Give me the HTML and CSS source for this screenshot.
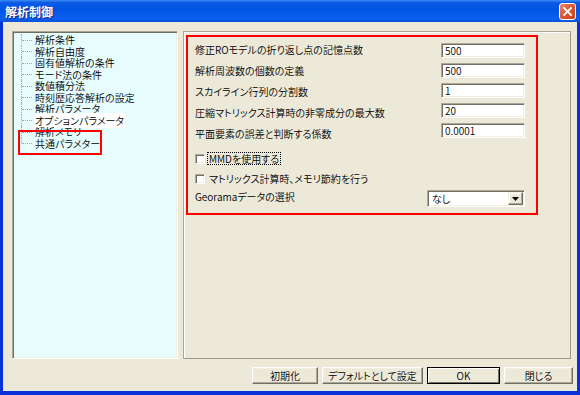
FILE: index.html
```html
<!DOCTYPE html>
<html lang="ja">
<head>
    <meta charset="UTF-8">
    <title>解析制御</title>
    <link rel="stylesheet" href="styles.css">
</head>
<body>
    <div class="window">
        <div class="titlebar">
            <span class="title">解析制御</span>
            <span class="close">
                <svg width="9" height="9" viewBox="0 0 9 9">
                    <path d="M1 1 L8 8 M8 1 L1 8" stroke="#fff" stroke-width="1.8" stroke-linecap="square"/>
                </svg>
            </span>
        </div>
        <div class="client">
            <div class="main">
                <div class="tree">
                    <ul class="tree-list">
                        <li>解析条件</li>
                        <li>解析自由度</li>
                        <li>固有値解析の条件</li>
                        <li>モード法の条件</li>
                        <li>数値積分法</li>
                        <li>時刻歴応答解析の設定</li>
                        <li>解析パラメータ</li>
                        <li><span class="picked">オプションパラメータ</span></li>
                        <li>解析メモリ</li>
                        <li>共通パラメター</li>
                    </ul>
                    <div class="mark mark-tree"></div>
                </div>
                <div class="panel">
                    <div class="mark-box">
                        <div class="fields">
                            <div class="labels">
                                <span>修正ROモデルの折り返し点の記憶点数</span>
                                <span>解析周波数の個数の定義</span>
                                <span>スカイライン行列の分割数</span>
                                <span>圧縮マトリックス計算時の非零成分の最大数</span>
                                <span>平面要素の誤差と判断する係数</span>
                            </div>
                            <div class="inputs">
                                <div class="field">500</div>
                                <div class="field">500</div>
                                <div class="field">1</div>
                                <div class="field">20</div>
                                <div class="field">0.0001</div>
                            </div>
                        </div>
                        <div class="check first">
                            <span class="box"></span>
                            <span class="check-text focused">MMDを使用する</span>
                        </div>
                        <div class="check">
                            <span class="box"></span>
                            <span class="check-text">マトリックス計算時、メモリ節約を行う</span>
                        </div>
                        <div class="select-row">
                            <span>Georamaデータの選択</span>
                            <div class="select">
                                <span class="select-value">なし</span>
                                <span class="select-arrow">
                                    <svg width="7" height="4" viewBox="0 0 7 4"><path d="M0 0 H7 L3.5 4 Z" fill="#000"/></svg>
                                </span>
                            </div>
                        </div>
                    </div>
                </div>
            </div>
            <div class="buttons">
                <div class="btn btn-init">初期化</div>
                <div class="btn btn-default">デフォルトとして設定</div>
                <div class="btn btn-ok">OK</div>
                <div class="btn btn-close">閉じる</div>
            </div>
        </div>
    </div>
</body>
</html>
```

FILE: styles.css
```css
html, body {
    margin: 0;
    padding: 0;
}
body {
    width: 580px;
    height: 395px;
    overflow: hidden;
    background: #ece9d8;
    font-family: "Noto Sans CJK JP", sans-serif;
    font-size: 10px;
    font-weight: 350;
    font-feature-settings: "palt";
    color: #000;
}
.window {
    height: 395px;
    display: flex;
    flex-direction: column;
}
.titlebar {
    height: 22px;
    flex: none;
    display: flex;
    align-items: center;
    justify-content: space-between;
    padding: 0 4px 0 5px;
    background: linear-gradient(#3d8cf5 0%, #0a5ae6 12%, #0054e3 45%, #0961f0 85%, #0a4fd8 100%);
}
.title {
    color: #fff;
    font-weight: bold;
    font-size: 12px;
    text-shadow: 1px 1px 0 #0a2a8a;
}
.close {
    width: 17px;
    height: 17px;
    box-sizing: border-box;
    border: 1px solid #fff;
    border-radius: 3px;
    background: linear-gradient(135deg, #ec8a6c 0%, #dd5a36 45%, #c8401c 100%);
    display: flex;
    align-items: center;
    justify-content: center;
}
.client {
    flex: 1;
    display: flex;
    flex-direction: column;
    gap: 8px;
    padding: 9px 6px 7px 9px;
    border: 0 solid #0831d9;
    border-width: 0 3px 4px 3px;
    min-height: 0;
}
.main {
    flex: 1;
    display: flex;
    gap: 5px;
    min-height: 0;
}

/* tree */
.tree {
    width: 166px;
    flex: none;
    position: relative;
    box-sizing: border-box;
    background: #e6fcfd;
    border: 1px solid;
    border-color: #aca899 #fff #fff #aca899;
    box-shadow: inset 1px 1px 0 #716f64, inset -1px -1px 0 #f1efe2;
    padding: 2px 0 0 1px;
}
.tree-list {
    list-style: none;
    margin: 0;
    padding: 0;
}
.tree-list li {
    position: relative;
    height: 11.5px;
    line-height: 11.5px;
    padding-left: 21px;
    white-space: nowrap;
}
.tree-list li::before {
    content: "";
    position: absolute;
    left: 7px;
    top: 0;
    bottom: 0;
    border-left: 1px dotted #a8a8a8;
}
.tree-list li:last-child::before {
    bottom: 50%;
}
.tree-list li::after {
    content: "";
    position: absolute;
    left: 8px;
    width: 10px;
    top: 50%;
    border-top: 1px dotted #a8a8a8;
}
.picked {
    background: #fff;
    padding: 0 1px;
    margin-left: -1px;
}
.mark {
    position: absolute;
    border: 2px solid #f00;
    box-sizing: border-box;
}
.mark-tree {
    left: 5px;
    top: 98px;
    width: 84px;
    height: 25px;
}

/* right panel */
.panel {
    flex: 1;
    box-sizing: border-box;
    border: 1px solid;
    border-color: #aca899 #9d9a8a #9d9a8a #aca899;
    box-shadow: inset 1px 1px 0 #fff;
    padding: 3px 0 0 2px;
}
.mark-box {
    width: 352px;
    height: 180px;
    box-sizing: border-box;
    border: 2px solid #f00;
    padding: 6px 11px 0 7px;
}
.fields {
    display: flex;
    justify-content: space-between;
}
.labels {
    display: flex;
    flex-direction: column;
    gap: 8px;
}
.labels span {
    line-height: 13px;
    height: 13px;
    white-space: nowrap;
}
.inputs {
    display: flex;
    flex-direction: column;
    gap: 5px;
}
.field {
    width: 84px;
    height: 15px;
    box-sizing: border-box;
    background: #fff;
    border: 1px solid;
    border-color: #aca899 #fff #fff #aca899;
    box-shadow: inset 1px 1px 0 #716f64, inset -1px -1px 0 #f1efe2;
    padding: 0 3px;
    line-height: 13px;
}
.check {
    display: flex;
    align-items: center;
    gap: 2px;
    height: 13px;
    margin-top: 7px;
}
.check.first {
    margin-top: 12px;
}
.box {
    width: 10px;
    height: 10px;
    box-sizing: border-box;
    background: #fff;
    border: 1px solid;
    border-color: #aca899 #fff #fff #aca899;
    box-shadow: inset 1px 1px 0 #716f64, inset -1px -1px 0 #f1efe2;
}
.check-text {
    padding: 0 1px;
    line-height: 11px;
    border: 1px solid transparent;
    white-space: nowrap;
}
.check-text.focused {
    border: 1px dotted #000;
}
.select-row {
    display: flex;
    justify-content: space-between;
    align-items: flex-start;
    margin-top: 5px;
    line-height: 13px;
}
.select {
    width: 98px;
    height: 17px;
    box-sizing: border-box;
    display: flex;
    align-items: stretch;
    justify-content: space-between;
    background: #fff;
    border: 1px solid;
    border-color: #aca899 #fff #fff #aca899;
    box-shadow: inset 1px 1px 0 #716f64, inset -1px -1px 0 #f1efe2;
    padding: 1px;
}
.select-value {
    padding-left: 3px;
    line-height: 13px;
}
.select-arrow {
    width: 15px;
    box-sizing: border-box;
    background: #ece9d8;
    border: 1px solid;
    border-color: #f1efe2 #716f64 #716f64 #f1efe2;
    box-shadow: inset -1px -1px 0 #aca899, inset 1px 1px 0 #fff;
    display: flex;
    align-items: center;
    justify-content: center;
}

/* buttons */
.buttons {
    height: 17px;
    flex: none;
    display: flex;
    justify-content: flex-end;
    gap: 4px;
    margin-right: -2px;
}
.btn {
    box-sizing: border-box;
    height: 17px;
    display: flex;
    align-items: center;
    justify-content: center;
    background: #ece9d8;
    border: 1px solid;
    border-color: #fff #716f64 #716f64 #fff;
    box-shadow: inset -1px -1px 0 #aca899, inset 1px 1px 0 #f1efe2;
}
.btn-init { width: 66px; }
.btn-default { width: 101px; }
.btn-ok {
    width: 73px;
    border: 1px solid #000;
    box-shadow: inset 1px 1px 0 #fff, inset -1px -1px 0 #716f64;
}
.btn-close { width: 69px; }
```
